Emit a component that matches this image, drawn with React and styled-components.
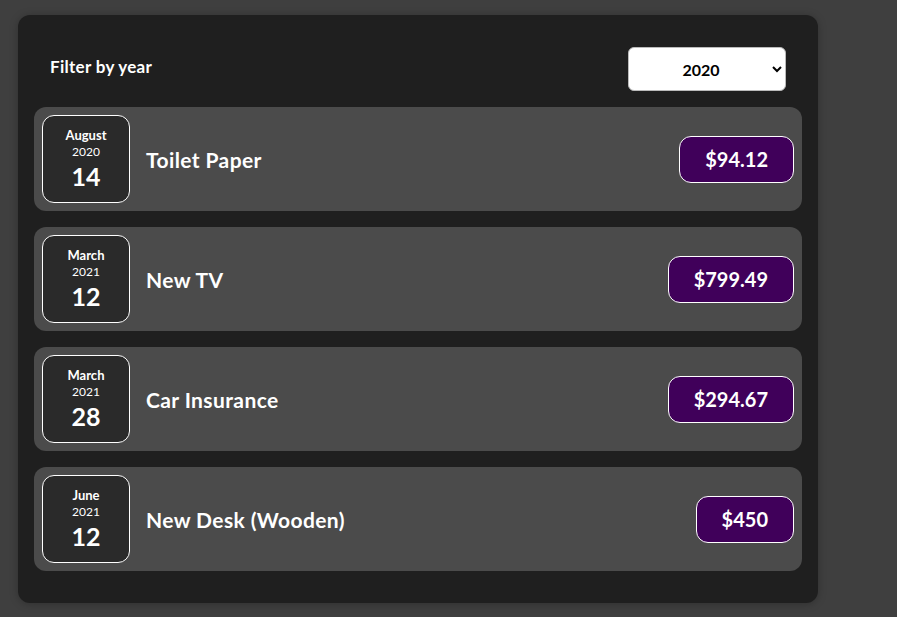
import styled, { createGlobalStyle } from 'styled-components';

const Global = createGlobalStyle`
    html, body {
        margin: 0;
        background: #3f3f3f;
        font-family: Lato, "Noto Sans", sans-serif;
    }
`;

const Page = styled.div`
    padding: 15px 0 14px 18px;
`;

const Card = styled.div`
    width: 800px;
    box-sizing: border-box;
    padding: 16px 16px 32px;
    background: #1f1f1f;
    border-radius: 12px;
    box-shadow: 0 1px 8px rgba(0, 0, 0, 0.25);
`;

const Filter = styled.div`
    display: flex;
    justify-content: space-between;
    align-items: center;
    padding: 16px 16px 0;
    margin-bottom: 16px;
`;

const Label = styled.label`
    color: white;
    font-weight: 700;
    font-size: 17px;
    letter-spacing: 0.3px;
    margin-top: -6px;
`;

const Select = styled.select`
    width: 158px;
    height: 44px;
    border-radius: 6px;
    border: 1px solid #bbb;
    background: white;
    font-family: Lato, sans-serif;
    font-weight: 700;
    font-size: 16px;
    text-align: center;
    text-align-last: center;
    padding: 0 8px;
`;

const List = styled.ul`
    list-style: none;
    margin: 0;
    padding: 0;
    display: flex;
    flex-direction: column;
    gap: 16px;
`;

const Item = styled.li`
    display: flex;
    align-items: center;
    padding: 8px;
    height: 104px;
    box-sizing: border-box;
    background: #4b4b4b;
    border-radius: 12px;
`;

const DateBox = styled.div`
    width: 88px;
    height: 88px;
    box-sizing: border-box;
    border: 1px solid white;
    border-radius: 12px;
    background: #2a2a2a;
    color: white;
    display: flex;
    flex-direction: column;
    align-items: center;
    justify-content: center;
`;

const Month = styled.div`
    font-size: 13px;
    font-weight: 700;
    line-height: 16px;
`;

const Year = styled.div`
    font-size: 12px;
    line-height: 18px;
`;

const Day = styled.div`
    font-size: 25px;
    font-weight: 700;
    line-height: 30px;
`;

const Title = styled.h2`
    flex: 1;
    margin: 0 0 0 16px;
    color: white;
    font-size: 21px;
    letter-spacing: 0.4px;
    font-weight: 700;
`;

const Price = styled.div`
    height: 47px;
    box-sizing: border-box;
    display: flex;
    align-items: center;
    padding: 0 25px;
    background: #40005a;
    border: 1px solid white;
    border-radius: 12px;
    color: white;
    font-size: 20px;
    font-weight: 700;
`;

const expenses = [
    { month: 'August', year: 2020, day: 14, title: 'Toilet Paper', amount: '$94.12' },
    { month: 'March', year: 2021, day: 12, title: 'New TV', amount: '$799.49' },
    { month: 'March', year: 2021, day: 28, title: 'Car Insurance', amount: '$294.67' },
    { month: 'June', year: 2021, day: 12, title: 'New Desk (Wooden)', amount: '$450' },
];

export default function App() {
    return (
        <Page>
            <Global />
            <Card>
                <Filter>
                    <Label>Filter by year</Label>
                    <Select defaultValue="2020">
                        <option value="2022">2022</option>
                        <option value="2021">2021</option>
                        <option value="2020">2020</option>
                        <option value="2019">2019</option>
                    </Select>
                </Filter>
                <List>
                    {expenses.map((e, i) => (
                        <Item key={i}>
                            <DateBox>
                                <Month>{e.month}</Month>
                                <Year>{e.year}</Year>
                                <Day>{e.day}</Day>
                            </DateBox>
                            <Title>{e.title}</Title>
                            <Price>{e.amount}</Price>
                        </Item>
                    ))}
                </List>
            </Card>
        </Page>
    );
}
